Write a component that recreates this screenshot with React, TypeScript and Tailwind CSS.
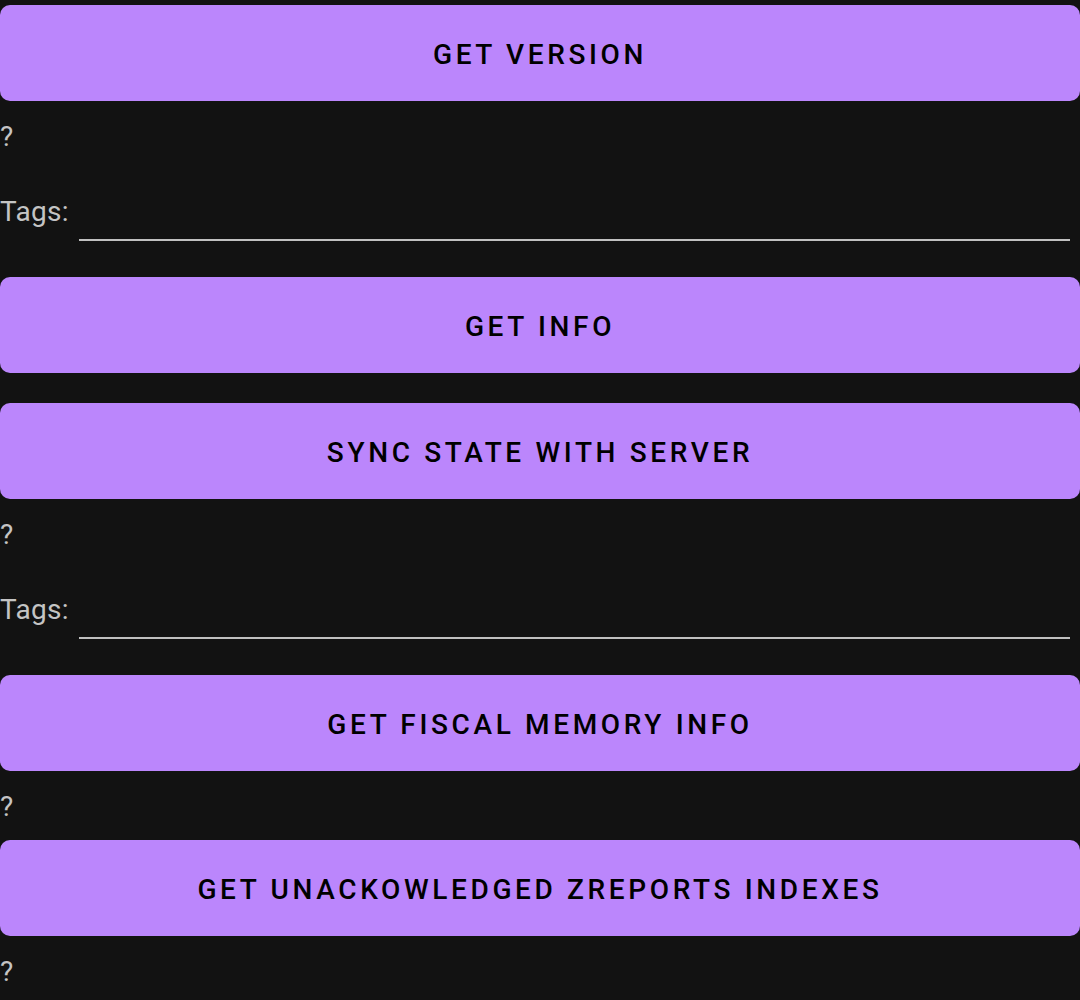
import React from 'react';

const ActionButton: React.FC<{ label: string; className?: string }> = ({ label, className = '' }) => (
  <button
    className={`flex h-[96px] w-full items-center justify-center rounded-[10px] bg-[#bb86fc] pt-1 text-[28px] font-medium uppercase tracking-[0.13em] text-black ${className}`}
  >
    {label}
  </button>
);

const Result: React.FC<{ className?: string }> = ({ className = '' }) => (
  <div className={`h-[40px] text-[28px] leading-[40px] text-[#c4c4c4] ${className}`}>?</div>
);

const TagsRow: React.FC = () => (
  <div className="mt-[35px] flex h-[49px] items-end">
    <span className="pb-[9px] text-[28px] leading-[40px] tracking-[0.01em] text-[#c4c4c4]">Tags:</span>
    <div className="ml-[10px] mr-[10px] h-full flex-1 border-b-2 border-[#c0c0c0]" />
  </div>
);

export default function App() {
  return (
    <div className="min-h-[1000px] bg-[#121212] pt-[5px] font-['Roboto',sans-serif]">
      <ActionButton label="Get version" />
      <Result className="mt-4" />
      <TagsRow />

      <ActionButton label="Get info" className="mt-[36px]" />
      <ActionButton label="Sync state with server" className="mt-[30px]" />
      <Result className="mt-4" />
      <TagsRow />

      <ActionButton label="Get fiscal memory info" className="mt-[36px]" />
      <Result className="mt-4" />

      <ActionButton label="Get unackowledged zreports indexes" className="mt-[13px]" />
      <Result className="mt-4" />
    </div>
  );
}
